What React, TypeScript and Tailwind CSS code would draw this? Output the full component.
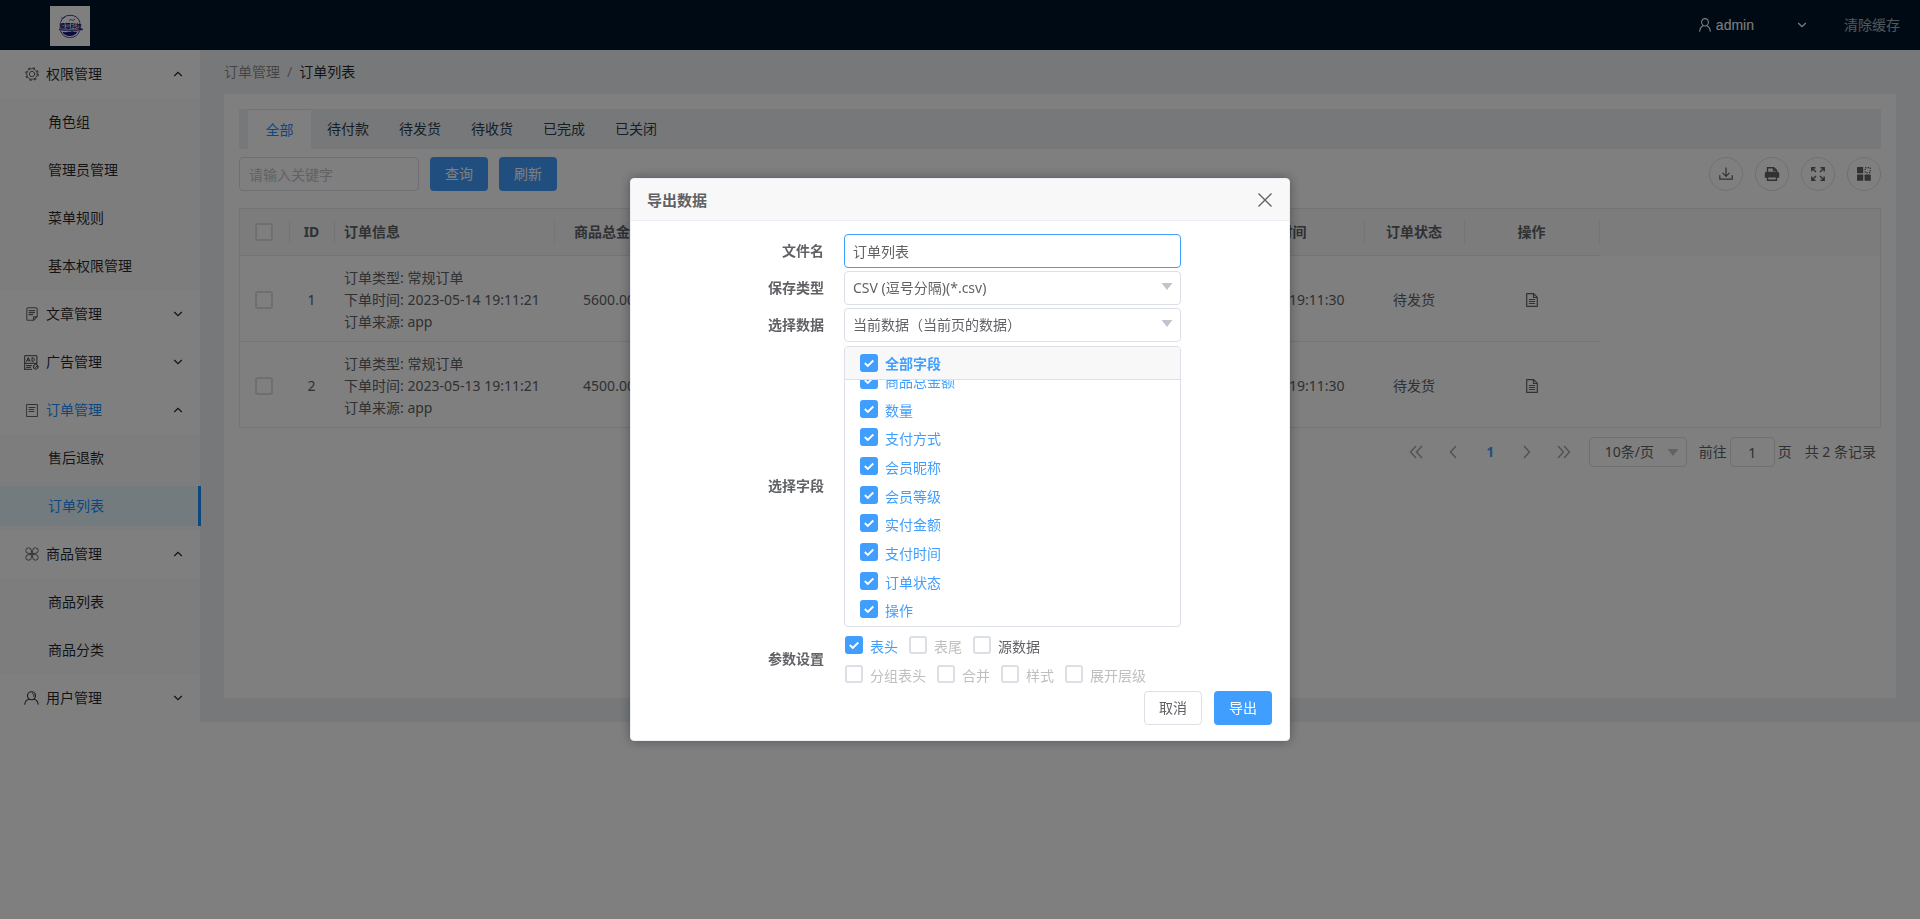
import React, { useState } from "react";

type MenuGroup = {
  title: string;
  icon: React.ReactNode;
  open: boolean;
  active?: boolean;
  children: { label: string; active?: boolean }[];
};

const stroke = {
  fill: "none",
  stroke: "currentColor",
  strokeLinecap: "round" as const,
  strokeLinejoin: "round" as const,
};

const GearIcon = () => (
  <svg width="14" height="14" viewBox="0 0 14 14" {...stroke} strokeWidth="1" className="text-[#666]">
    <circle cx="7" cy="7" r="5.300" strokeWidth=".9" />
    <circle cx="7" cy="7" r="6.200" strokeDasharray="2.430 2.440" strokeWidth="1.300" strokeLinecap="butt" />
    <circle cx="7" cy="7" r="2.700" />
  </svg>
);

const NoteIcon = () => (
  <svg width="12" height="14" viewBox="0 0 12 14" {...stroke} strokeWidth="1.1" className="text-[#666]">
    <path d="M7.5 13.300H2.200A1.400 1.400 0 0 1 .8 11.900V2.200A1.400 1.400 0 0 1 2.200.8h7.600a1.400 1.400 0 0 1 1.400 1.400v7.500l-3.700 3.600V9.900h3.600" />
    <path d="M3 3.600h5.600M3 5.600h5.600M3 7.600h3.600" />
  </svg>
);

const AdIcon = () => (
  <svg width="15" height="15" viewBox="0 0 15 15" {...stroke} strokeWidth="1" className="text-[#444]">
    <path d="M.7 14.300V.7h12.200v7.600M.7 8.300h12.200M2.600 10.600h5M2.600 12.400h4M.7 14.300h7" />
    <path d="M2.600 6.300 4.300 2.600 6 6.300M3.200 5.200h2.200M8 2.800v3.500h.8c2.200 0 2.200-3.500 0-3.500z" />
    <circle cx="11.700" cy="11.800" r="2.400" />
    <path d="m10.900 11.900.7.7 1.100-1.500" />
  </svg>
);

const ClipIcon = () => (
  <svg width="12" height="14" viewBox="0 0 12 14" {...stroke} strokeWidth="1" className="text-[#666]">
    <path d="M3 1.500H.6v12h10.800v-12H9M3.400 1.500h5.200M3 4.500h6M3 6.500h4.600M3 8.500h5" />
  </svg>
);

const CloverIcon = () => (
  <svg width="14" height="14" viewBox="0 0 14 14" {...stroke} strokeWidth="1" className="text-[#666]">
    <path d="M6.400 6.400H3.600a2.800 2.800 0 1 1 2.800-2.800zM7.600 6.400V3.600a2.800 2.800 0 1 1 2.800 2.800zM6.400 7.600v2.800a2.800 2.800 0 1 1-2.800-2.800zM7.600 7.600h2.800a2.800 2.800 0 1 1-2.800 2.800z" />
  </svg>
);

const UserIcon = ({ className }: { className?: string }) => (
  <svg width="15" height="14" viewBox="0 0 15 14" {...stroke} strokeWidth="1.100" className={className}>
    <circle cx="7.500" cy="4.700" r="4" />
    <path d="M8.500 2.600c1.300.5 1.700 1.600 1.300 2.800" strokeWidth=".9" />
    <path d="M.8 13.200c.3-2.600 1.800-4.500 4.200-5M14.200 13.200c-.3-2.600-1.800-4.500-4.200-5" />
  </svg>
);

const PersonIcon = () => (
  <svg width="12" height="14" viewBox="0 0 12 14" {...stroke} strokeWidth="1.100">
    <ellipse cx="6" cy="4.300" rx="3.400" ry="3.700" />
    <path d="M.7 13.300C.9 10.600 2.200 8.600 4.200 7.700M11.300 13.300C11.100 10.600 9.800 8.600 7.800 7.700" />
  </svg>
);

const Chevron = ({ up }: { up?: boolean }) => (
  <svg width="10" height="6" viewBox="0 0 10 6" {...stroke} strokeLinecap="butt" strokeLinejoin="miter" strokeWidth="1.300">
    <path d={up ? "M1.200 5 5 1.400 8.800 5" : "M1.200 1 5 4.600 8.800 1"} />
  </svg>
);

const Logo = () => (
  <svg width="40" height="40" viewBox="0 0 40 40" className="mt-0.5 bg-white" role="img" aria-label="logo">
    <g fill="none" stroke="#2a2a8a" strokeWidth=".9">
      <path d="M10.500 16.500a10.200 10.200 0 0 1 19.500 0" />
      <path d="M10.500 25a10.200 10.200 0 0 0 19.200-.5" />
      <path d="M9 23.600c8 .9 17 .6 24-.3" strokeWidth="1.300" />
      <path d="m11 11.500 2 1 2-1.500M19 14.500l2-1 2 1 2-1.500" strokeWidth=".7" />
    </g>
    <path d="M12.500 26.500c2-1.500 3 .500 4.500-.5s3 .500 4-.5 3 1 6.500 0c-1.500 2.800-4 4.500-7.500 4.500s-6-1.200-7.500-3.500z" fill="#14147a" />
    <text x="20.500" y="22" textAnchor="middle" fontSize="5.500" fontWeight="900" fill="#14147a">
      顺慧科技
    </text>
  </svg>
);

const menu: MenuGroup[] = [
  {
    title: "权限管理",
    icon: <GearIcon />,
    open: true,
    children: [{ label: "角色组" }, { label: "管理员管理" }, { label: "菜单规则" }, { label: "基本权限管理" }],
  },
  { title: "文章管理", icon: <NoteIcon />, open: false, children: [] },
  { title: "广告管理", icon: <AdIcon />, open: false, children: [] },
  {
    title: "订单管理",
    icon: <ClipIcon />,
    open: true,
    active: true,
    children: [{ label: "售后退款" }, { label: "订单列表", active: true }],
  },
  {
    title: "商品管理",
    icon: <CloverIcon />,
    open: true,
    children: [{ label: "商品列表" }, { label: "商品分类" }],
  },
  { title: "用户管理", icon: <UserIcon className="text-[#333]" />, open: false, children: [] },
];

function Check({
  label,
  hideLabel,
  defaultChecked,
  disabled,
  bold,
}: {
  label: string;
  hideLabel?: boolean;
  defaultChecked?: boolean;
  disabled?: boolean;
  bold?: boolean;
}) {
  const [on, setOn] = useState(!!defaultChecked);
  const tone = disabled ? "text-[#bfbfbf]" : on ? "text-[#409eff]" : "text-[#606266]";
  return (
    <label className={`flex w-fit items-start gap-[7px] ${tone} ${bold ? "leading-5 font-bold" : "leading-[22px]"}`}>
      <span className="relative block size-[18px] shrink-0">
        <input
          type="checkbox"
          aria-label={label}
          checked={on}
          disabled={disabled}
          onChange={() => setOn(!on)}
          className="block size-[18px] appearance-none rounded-[3px] border-2 border-[#dcdfe6] bg-white checked:border-[#409eff] checked:bg-[#409eff]"
        />
        {on && (
          <svg viewBox="0 0 18 18" className="pointer-events-none absolute inset-0" fill="none" stroke="#fff" strokeWidth="1.900">
            <path d="m4.800 9 3 3L13.300 6.500" />
          </svg>
        )}
      </span>
      {!hideLabel && <span>{label}</span>}
    </label>
  );
}

function Sidebar() {
  return (
    <nav className="relative w-[200px] shrink-0 bg-white text-black/85">
      {menu.map((g) => (
        <div key={g.title}>
          <button
            type="button"
            aria-expanded={g.open}
            className={`flex h-12 w-full items-center pr-[17px] pl-6 ${g.active ? "text-[#1890ff]" : ""}`}
          >
            <span className="flex w-[22px] items-center">
              <span className="flex w-[15px] justify-center">{g.icon}</span>
            </span>
            <span className="flex-1 text-left">{g.title}</span>
            <span className="text-black/85">
              <Chevron up={g.open} />
            </span>
          </button>
          {g.open && (
            <ul className="bg-[#fafafa]">
              {g.children.map((c) => (
                <li key={c.label} className="py-1">
                  <a
                    href="#"
                    className={
                      c.active
                        ? "-mr-px flex h-10 items-center border-r-3 border-[#1890ff] bg-[#e6f7ff] pl-12 text-[#1890ff]"
                        : "flex h-10 items-center pl-12"
                    }
                  >
                    {c.label}
                  </a>
                </li>
              ))}
            </ul>
          )}
        </div>
      ))}
    </nav>
  );
}

const columns = [
  { title: "订单信息", left: true },
  { title: "商品总金额" },
  { title: "数量" },
  { title: "支付方式" },
  { title: "会员昵称" },
  { title: "会员等级" },
  { title: "实付金额" },
  { title: "支付时间" },
  { title: "订单状态" },
  { title: "操作" },
];

const rows = [
  { id: 1, created: "2023-05-14 19:11:21", total: "5600.00", paid: "2023-05-14 19:11:30" },
  { id: 2, created: "2023-05-13 19:11:21", total: "4500.00", paid: "2023-05-13 19:11:30" },
];

const sep = "relative pr-0.5 after:absolute after:top-[11px] after:right-0 after:h-6 after:w-px after:bg-[#e8eaec]";

function OrdersTable() {
  return (
    <div className="overflow-hidden border border-[#e8eaec]">
      <table className="w-full table-fixed border-separate border-spacing-0 text-center text-[#606266]">
        <colgroup>
          <col className="w-[50px]" />
          <col className="w-[45px]" />
          <col className="w-[220px]" />
          <col className="w-[110px]" />
          <col className="w-[80px]" />
          <col className="w-[110px]" />
          <col className="w-[120px]" />
          <col className="w-[109px]" />
          <col className="w-[110px]" />
          <col className="w-[171px]" />
          <col className="w-[100px]" />
          <col className="w-[135px]" />
          <col />
        </colgroup>
        <thead className="bg-[#f8f8f9] font-bold">
          <tr className="h-[47px]">
            <th className={`border-b border-[#e8eaec] ${sep}`}>
              <span className="flex justify-center">
                <Check label="全选" hideLabel />
              </span>
            </th>
            <th className={`border-b border-[#e8eaec] ${sep}`}>ID</th>
            {columns.map((c) => (
              <th
                key={c.title}
                className={`border-b border-[#e8eaec] ${sep} ${c.left ? "pl-[9px] text-left" : ""}`}
              >
                {c.title}
              </th>
            ))}
            <td />
          </tr>
        </thead>
        <tbody className="[&>tr>td]:pt-0.5 [&>tr>td]:pr-0.5 [&>tr:first-child>td:not(:last-child)]:border-b [&>tr:first-child>td:not(:last-child)]:border-[#e8eaec]">
          {rows.map((r) => (
            <tr key={r.id} className={r.id === 1 ? "h-[86px]" : "h-[85px]"}>
              <td>
                <span className="flex justify-center">
                  <Check label={`选择订单 ${r.id}`} hideLabel />
                </span>
              </td>
              <td>{r.id}</td>
              <td className="pl-[9px] text-left leading-[22px] whitespace-nowrap">
                <p>订单类型: 常规订单</p>
                <p>下单时间: {r.created}</p>
                <p>订单来源: app</p>
              </td>
              <td>{r.total}</td>
              <td>1</td>
              <td>微信</td>
              <td>admin</td>
              <td>普通</td>
              <td>{r.total}</td>
              <td className="whitespace-nowrap">{r.paid}</td>
              <td>待发货</td>
              <td>
                <button type="button" aria-label="详情" className="block w-full">
                  <svg width="12" height="14" viewBox="0 0 12 14" {...stroke} strokeWidth="1.200" className="mx-auto">
                    <path d="M.7.7h7l3.600 3.600v9H.7zM7.500.9v3.600h3.600M3.300 6.500h5.400M3.300 8.500h5.400M3.300 10.500h5.400" />
                  </svg>
                </button>
              </td>
              <td />
            </tr>
          ))}
        </tbody>
      </table>
    </div>
  );
}

const tools = [
  {
    label: "导出",
    icon: (
      <svg width="14" height="14" viewBox="0 0 14 14" {...stroke} strokeWidth="1.200">
        <path d="M.8 8.500v3.700h12.400V8.500M7 .8v8.400M3.800 6.200 7 9.400l3.200-3.200" />
      </svg>
    ),
  },
  {
    label: "打印",
    icon: (
      <svg width="16" height="14" viewBox="0 0 16 14" fill="currentColor">
        <path d="M3.500 5V.7h6.300L12.500 3.400V5M9.500.9V3.500h2.800" fill="none" stroke="currentColor" strokeWidth="1.400" />
        <path d="M2.500 4.800h11A1.700 1.700 0 0 1 15.200 6.500v4.200H.8V6.500A1.700 1.700 0 0 1 2.500 4.800z" />
        <path d="M3.500 9.800h9v3.400h-9z" fill="#fff" stroke="currentColor" strokeWidth="1.400" />
      </svg>
    ),
  },
  {
    label: "全屏",
    icon: (
      <svg width="14" height="14" viewBox="0 0 14 14" fill="none" stroke="currentColor" strokeWidth="1.400">
        <path d="M.8 4.500V.8h3.700M1 1l4 4M9.500.8h3.700v3.700M13 1 9 5M.8 9.500v3.700h3.700M1 13l4-4M9.500 13.200h3.700V9.500M13 13 9 9" />
      </svg>
    ),
  },
  {
    label: "列设置",
    icon: (
      <svg width="14" height="14" viewBox="0 0 14 14" fill="currentColor">
        <rect width="6.200" height="6.200" rx=".6" />
        <rect y="7.600" width="6.200" height="6.200" rx=".6" />
        <rect x="7.600" y="7.600" width="6.200" height="6.200" rx=".6" />
        <rect x="8.200" y=".6" width="5" height="5" fill="none" stroke="currentColor" strokeWidth="1.200" strokeDasharray="1.300 1.200" />
      </svg>
    ),
  },
];

const pageArrow = (d: string, w: number, label: string) => (
  <button type="button" aria-label={label} className="flex h-[30px] w-[37px] items-center justify-center text-[#a0a3a8]">
    <svg width={w} height="14" viewBox={`0 0 ${w} 14`} fill="none" stroke="currentColor" strokeWidth="1.400">
      <path d={d} />
    </svg>
  </button>
);

function Pagination() {
  return (
    <div className="mt-[9px] flex h-[30px] items-center justify-end pr-[5px] text-[#606266]">
      {pageArrow("M7 1 1.500 7 7 13M13 1 7.500 7 13 13", 14, "首页")}
      {pageArrow("M7 1 1.500 7 7 13", 8, "上一页")}
      <button type="button" aria-current="page" className="h-[30px] w-[37px] font-bold text-[#409eff]">
        1
      </button>
      {pageArrow("M1 1l5.500 6L1 13", 8, "下一页")}
      {pageArrow("M1 1l5.500 6L1 13M7 1l5.500 6L7 13", 14, "末页")}
      <span className="relative ml-[6px]">
        <select
          aria-label="每页条数"
          className="block h-[30px] w-[98px] appearance-none rounded-sm border border-[#dcdfe6] bg-white pl-[15px] text-[#606266]"
        >
          <option>10条/页</option>
        </select>
        <Triangle className="right-2" />
      </span>
      <label className="ml-3 flex items-center gap-[3px]">
        前往
        <input
          defaultValue="1"
          className="h-[30px] w-[45px] rounded-sm border border-[#dcdfe6] bg-white text-center"
        />
        页
      </label>
      <span className="ml-[13px]">共 2 条记录</span>
    </div>
  );
}

function Triangle({ className }: { className: string }) {
  return (
    <svg
      width="12"
      height="7"
      viewBox="0 0 12 7"
      fill="#c0c4cc"
      className={`pointer-events-none absolute top-3 ${className}`}
    >
      <path d="M.500 0h11L6 7z" />
    </svg>
  );
}

function FormRow({ label, id, children }: { label: string; id?: string; children: React.ReactNode }) {
  return (
    <div className="flex items-center gap-5">
      {id ? (
        <label htmlFor={id} className="w-[176px] text-right font-bold">
          {label}
        </label>
      ) : (
        <span className="w-[176px] text-right font-bold">{label}</span>
      )}
      <div className="w-[337px]">{children}</div>
    </div>
  );
}

const fields = ["商品总金额", "数量", "支付方式", "会员昵称", "会员等级", "实付金额", "支付时间", "订单状态", "操作"];

function ExportDialog() {
  const box = "block h-[34px] w-full appearance-none rounded-sm border bg-white px-2 text-[#606266] outline-none";
  return (
    <div className="fixed inset-0 flex items-center justify-center bg-black/50">
      <section
        role="dialog"
        aria-label="导出数据"
        className="w-[660px] overflow-hidden rounded-sm border border-[#ebeef5] bg-white text-[#606266] shadow-[0_0_12px_rgba(0,0,0,0.35)]"
      >
        <header className="flex h-[42px] items-center justify-between border-b border-[#ebeef5] bg-[#f8f8f8] pr-[17px] pl-4">
          <h2 className="pt-0.5 text-[15px] font-bold">导出数据</h2>
          <button type="button" aria-label="关闭">
            <svg width="14" height="14" viewBox="0 0 14 14" fill="none" stroke="currentColor" strokeWidth="1.400">
              <path d="m.500.500 13 13M13.500.500l-13 13" />
            </svg>
          </button>
        </header>
        <div className="flex flex-col gap-[3px] pt-[13px] pr-[17px] pb-[15px] pl-[17px]">
          <FormRow label="文件名" id="file-name">
            <input id="file-name" defaultValue="订单列表" className={`${box} border-[#409eff]`} />
          </FormRow>
          <FormRow label="保存类型" id="save-type">
            <span className="relative block">
              <select id="save-type" className={`${box} border-[#dcdfe6]`}>
                <option>CSV (逗号分隔)(*.csv)</option>
              </select>
              <Triangle className="right-2" />
            </span>
          </FormRow>
          <FormRow label="选择数据" id="data-range">
            <span className="relative block">
              <select id="data-range" className={`${box} border-[#dcdfe6]`}>
                <option>当前数据（当前页的数据）</option>
              </select>
              <Triangle className="right-2" />
            </span>
          </FormRow>
          <FormRow label="选择字段">
            <div className="mt-px overflow-hidden rounded-sm border border-[#dcdfe6]">
              <div className="h-[33px] border-b border-[#dcdfe6] bg-[#f8f8f8] pt-[7px] pl-[15px]">
                <Check label="全部字段" defaultChecked bold />
              </div>
              <div className="h-[246px] overflow-hidden pl-[15px]">
                <ul className="-mt-[9px] grid h-[258px] grid-rows-9">
                  {fields.map((f) => (
                    <li key={f}>
                      <Check label={f} defaultChecked />
                    </li>
                  ))}
                </ul>
              </div>
            </div>
          </FormRow>
          <FormRow label="参数设置">
            <div className="mt-1.5 ml-px flex flex-col items-start">
              <div className="flex h-[29px] gap-[11px]">
                <Check label="表头" defaultChecked />
                <Check label="表尾" disabled />
                <Check label="源数据" />
              </div>
              <div className="flex h-[23px] gap-[11px]">
                <Check label="分组表头" disabled />
                <Check label="合并" disabled />
                <Check label="样式" disabled />
                <Check label="展开层级" disabled />
              </div>
            </div>
          </FormRow>
          <div className="flex justify-end gap-3">
            <button type="button" className="h-[34px] w-[58px] rounded-sm border border-[#dcdfe6] bg-white">
              取消
            </button>
            <button type="button" className="h-[34px] w-[58px] rounded-sm bg-[#409eff] text-white">
              导出
            </button>
          </div>
        </div>
      </section>
    </div>
  );
}

export default function App() {
  return (
    <div className="bg-white font-['Noto_Sans','Noto_Sans_CJK_SC',sans-serif] text-sm">
      <header className="flex h-[50px] items-center justify-between bg-[#001529] pr-5 pl-[50px]">
        <Logo />
        <div className="flex items-center text-white">
          <button type="button" className="flex items-center gap-[5px] font-['Liberation_Sans','Noto_Sans_CJK_SC',sans-serif]">
            <PersonIcon />
            admin
            <span className="ml-[38px]">
              <Chevron />
            </span>
          </button>
          <a href="#" className="ml-[37px] text-white/65">
            清除缓存
          </a>
        </div>
      </header>
      <div className="flex">
        <Sidebar />
        <main className="flex min-w-0 flex-1 flex-col bg-[#eff1f4] px-6 pb-6">
          <nav aria-label="breadcrumb" className="flex h-11 items-center gap-[7px] text-black/45">
            <a href="#">订单管理</a>
            <span>/</span>
            <span className="text-black/85">订单列表</span>
          </nav>
          <div className="flex-1 bg-white p-[15px]">
            <div role="tablist" className="flex h-10 bg-[#eff1f4] pl-[9px] text-[#2c3e50]">
              <button
                type="button"
                role="tab"
                aria-selected="true"
                className="mr-px w-[63px] border-t border-[#e4e7ed] bg-white text-[#1890ff]"
              >
                全部
              </button>
              {["待付款", "待发货", "待收货", "已完成", "已关闭"].map((t) => (
                <button key={t} type="button" role="tab" aria-selected="false" className="w-[72px]">
                  {t}
                </button>
              ))}
            </div>
            <div className="mt-2 flex items-center justify-between">
              <div className="flex gap-[11px]">
                <input
                  type="text"
                  aria-label="关键字"
                  placeholder="请输入关键字"
                  className="h-[34px] w-[180px] rounded-sm border border-[#dcdfe6] px-[9px] placeholder:text-[#c0c4cc]"
                />
                <button type="button" className="h-[34px] w-[58px] rounded-sm bg-[#409eff] text-white">
                  查询
                </button>
                <button type="button" className="h-[34px] w-[58px] rounded-sm bg-[#409eff] text-white">
                  刷新
                </button>
              </div>
              <div className="flex gap-3">
                {tools.map((t) => (
                  <button
                    key={t.label}
                    type="button"
                    aria-label={t.label}
                    className="flex size-[34px] items-center justify-center rounded-full border border-[#dcdfe6] text-[#606266]"
                  >
                    {t.icon}
                  </button>
                ))}
              </div>
            </div>
            <div className="mt-[17px]">
              <OrdersTable />
            </div>
            <Pagination />
          </div>
        </main>
      </div>
      <ExportDialog />
    </div>
  );
}
